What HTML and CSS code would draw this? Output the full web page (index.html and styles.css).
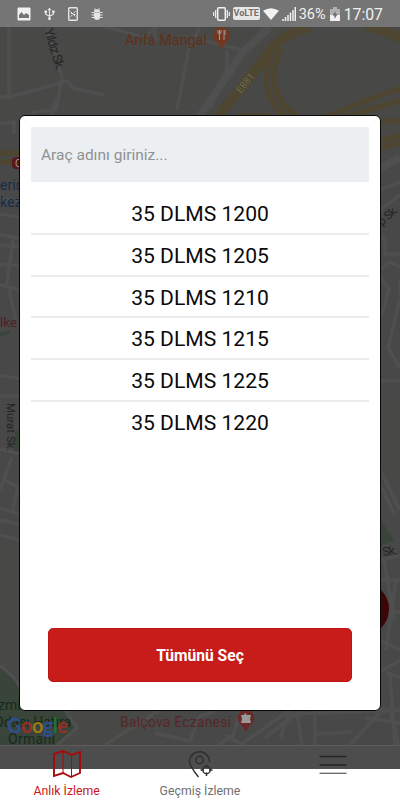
FILE: index.html
```html
<!DOCTYPE html>
<html lang="tr">
<head>
  <meta charset="UTF-8" />
  <meta name="viewport" content="width=device-width, initial-scale=1.0" />
  <title>Anlık İzleme</title>
  <link rel="stylesheet" href="styles.css">
</head>
<body>

  <header class="statusbar">
    <div class="status-left">
      <svg width="14" height="14" viewBox="0 0 14 14"><path fill="#f1f1f1" fill-rule="evenodd" d="M1.500 0.500h11a1 1 0 0 1 1 1v11a1 1 0 0 1-1 1h-11a1 1 0 0 1-1-1v-11a1 1 0 0 1 1-1zM2 11h10V8L9 6 7 8 4.500 5 2 8z"/></svg>
      <svg width="11" height="14" viewBox="0 0 12 14"><g fill="none" stroke="#e6e6e6" stroke-width="1.300"><path d="M6 2v10M1.800 4.500v2.700L6 9.500l4.200-2.300V4.500"/></g><path fill="#e6e6e6" d="M6 0l2 3H4zM.5 3.300h2.800V6H.5zM8.800 3.300h2.800V6H8.800z"/><circle cx="6" cy="12.200" r="1.600" fill="#e6e6e6"/></svg>
      <svg width="10" height="14" viewBox="0 0 10 14"><rect x=".7" y=".7" width="8.600" height="12.600" rx="1" fill="none" stroke="#e6e6e6" stroke-width="1.400"/><path d="M2.500 4.500l5 5M7.500 4.500L5.500 6M2.500 9.500L4.500 8M3 6.500h1M6 7.500h1.500" stroke="#e6e6e6"/></svg>
      <svg width="12" height="12" viewBox="0 0 12 12"><path fill="#e6e6e6" d="M3 4.500h6V9a3 3 0 0 1-6 0zM3 4a3 2.800 0 0 1 6 0z"/><path d="M3.500.5l1 1.500M8.500.5l-1 1.500M.5 4.500h2.500M9 4.500h2.500M.5 7h2.500M9 7h2.500M.5 9.500h2.500M9 9.500h2.500" stroke="#e6e6e6" stroke-width="1.100"/></svg>
    </div>
    <div class="status-right">
      <svg width="17" height="14" viewBox="0 0 17 14"><rect x="4.700" y=".8" width="7.600" height="12.400" rx="1" fill="none" stroke="#f1f1f1" stroke-width="1.500"/><path d="M2.700 3v8M14.300 3v8M.7 5v4M16.300 5v4" stroke="#f1f1f1" stroke-width="1.200"/></svg>
      <span class="volte">VoLTE</span>
      <svg width="16" height="12" viewBox="0 0 16 12"><path fill="#f1f1f1" d="M0 2.800Q8-2.500 16 2.800L8 12z"/></svg>
      <svg width="14" height="14" viewBox="0 0 14 14"><path d="M1 14v-2M3.500 14v-4M6 14V8M8.500 14V5.500M11 14V3M13.300 14V0" stroke="#f1f1f1" stroke-width="1.500"/></svg>
      <span class="battery-text">36%</span>
      <svg width="10" height="14" viewBox="0 0 10 14"><path fill="#b0b0b0" d="M3 0h4v2h3v6H0V2h3z"/><path fill="#f1f1f1" d="M0 8h10v6H0z"/><path fill="#666" d="M5.500 4L2.500 8.500h2V12l3-4.700h-2z"/></svg>
      <span class="clock">17:07</span>
    </div>
  </header>

  <main class="map">
    <svg class="map-canvas" viewBox="0 27 400 718" width="400" height="718">
      <rect y="27" width="400" height="718" fill="#484848"/>
      <path fill="#484846" d="M0 27h400v140L0 130zM0 530l20 10v140H0zM380 400h20v110l-20-40zM0 710h190l-70 35H0z"/>
      <!-- parks -->
      <path fill="#39443a" d="M0 667Q12 675 20 690L65 710 76 727 55 745H0zM15 432l5-3v24h-7zM380 519l14 21-14 6zM0 333l10-3v3l-10 4z"/>
      <!-- streets -->
      <g class="streets">
        <path d="M9 27v70H0M9 97l59-16 4 7 32 7M47 27l15 50-6 33-22 2-6 12M105 27l40 10 11-10M155 27v15M189 48l-12 62M189 48l11-21M200 40l43 10M227 50v18l-15 30v10M0 124l14-2v12M55 100l-4 20"/>
        <path d="M0 200h20M0 214l20 3M0 235l20 3M0 245l20 2M0 265h20M14 235l-8 53M0 285l20 5M9 290l8 35M0 375l20 4M0 396h20"/>
        <path d="M0 449l20 5M12 457L0 490M4 480l16 8M18 487l-6 25M0 508l20 6M0 520l20 4M0 535l20 5M0 666q15 10 20 21M65 710l12 18-20 17M105 745l55-35"/>
        <path d="M380 190l20-8M380 210l20-15M381 235l4 6v13l15 0M380 270l10-8 10 5M381 277l8 12-8 28M400 298l-12 50 12 20M380 381h20M400 280v15"/>
        <path d="M380 470l20 40M380 485l15 30M380 560l20-4M384 560l10 60M380 580h20M380 610l20 2M396 580l-10 70M380 640l20 10M380 672l20-12M390 675l5 70M386 672l14 6"/>
        <path d="M155 733l35 8 10-25 15-4M225 735l18 10M218 745l15-10 7-20M240 745l50-35M280 738l10-28M265 738l32-25 5 32M290 714l115-4M315 745v-35M317 734l35-2M350 745l35-38M365 718l35 5M390 710l10 40"/>
      </g>
      <g class="streets wide"><path d="M200 116L243 52 270 27M380 168l20-10"/></g>
      <!-- highways -->
      <g class="highway">
        <path d="M272 52Q262 80 271 98 276 108 286 118M281 48Q269 75 278 95 284 108 298 116M322 118L400 88M340 118l60-17M238 116h32M380 121h20M380 141l20-5M380 148l20-5M0 153h20M0 162h20"/>
        <path class="main-road" d="M217 118L275 45Q284 34 310 27M366 26q20 4 40 15"/>
      </g>
      <g class="labels">
        <text x="125" y="45" font-size="14.300" textLength="82" fill="#612f19">Arifa Mangal</text>
        <text transform="translate(44 30) rotate(73)" font-size="13" textLength="43" fill="#252525">Yıldız Sk.</text>
        <text transform="translate(241 94) rotate(-52)" font-size="10" fill="#6d684f">E881</text>
        <text transform="translate(7 403) rotate(90)" font-size="11.500" fill="#242424">Murat Sk.</text>
        <text transform="translate(382 226) rotate(-42)" font-size="11.500" textLength="23" fill="#242424">p Sk.</text>
        <text transform="translate(383 556) rotate(-8)" font-size="12" textLength="15" fill="#242424">Sk.</text>
        <text x="0" y="190" font-size="14" fill="#182c47">eris</text>
        <text x="0" y="207" font-size="14" fill="#182c47">kez</text>
        <text x="0" y="327" font-size="13.500" fill="#502020">lke</text>
        <text x="-2" y="710" font-size="14" fill="#142b18">zmir</text>
        <text x="-6" y="727" font-size="14" fill="#142b18" textLength="77">Odası Hatıra</text>
        <text x="8" y="744" font-size="14" fill="#142b18" textLength="47">Ormanı</text>
        <text x="120" y="727" font-size="14" fill="#572727" textLength="111">Balçova Eczanesi</text>
      </g>
      <rect x="12" y="157" width="14" height="12" rx="4" fill="#5c1919"/>
      <text x="15" y="167" font-size="10" fill="#999">O</text>
      <path fill="#713720" d="M221.500 49q-3-6-6-8a8.300 8.300 0 1 1 12 0q-3 2-6 8z"/>
      <path d="M218 30v3q1.500 2 3 0v-3M219.500 30v10M224 30v10M225 30v5" stroke="#999" fill="none"/>
      <path fill="#6a2929" d="M246 732q-3-6-6-8a8.300 8.300 0 1 1 12 0q-3 2-6 8z"/>
      <path fill="#999" d="M241 715h3l1-2 2 2h4l-1 4 1 4h-10l1-4z"/>
      <circle cx="362" cy="609" r="27" fill="#3d0505"/>
      <!-- map provider mark -->
      <text class="provider" x="7" y="733" textLength="61"><tspan fill="#2c4f92">G</tspan><tspan fill="#9a2e27">o</tspan><tspan fill="#9c7813">o</tspan><tspan fill="#2c4f92">g</tspan><tspan fill="#217039">l</tspan><tspan fill="#9a2e27">e</tspan></text>
    </svg>

    <section class="modal">
      <input class="search" type="text" placeholder="Araç adını giriniz..." />
      <ul class="vehicles">
        <li>35 DLMS 1200</li>
        <li>35 DLMS 1205</li>
        <li>35 DLMS 1210</li>
        <li>35 DLMS 1215</li>
        <li>35 DLMS 1225</li>
        <li>35 DLMS 1220</li>
      </ul>
      <button class="select-all">Tümünü Seç</button>
    </section>
  </main>

  <nav class="tabs">
    <a class="tab active">
      <svg width="30" height="30" viewBox="0 0 30 30"><path d="M2 5l9-3 9 4 8-3v21l-9 4-8-4-9 3z" fill="none" stroke="#a80b0b" stroke-width="1.900"/><path d="M11 2v22M19.500 6v22" stroke="#a80b0b"/></svg>
      <span>Anlık İzleme</span>
    </a>
    <a class="tab">
      <svg width="30" height="30" viewBox="0 0 30 30"><g fill="none" stroke="#2e2e2e" stroke-width="1.400"><path d="M13.500 28Q4.500 17 4.500 12a10 10 0 0 1 20 1.500"/><circle cx="14.500" cy="11" r="3.700"/><circle cx="21.500" cy="21" r="3.700"/><path d="M21.500 15.500v3M21.500 23.500v3.500M15.500 21h3.500M24 21h3.500"/></g></svg>
      <span>Geçmiş İzleme</span>
    </a>
    <a class="tab menu">
      <svg width="30" height="30" viewBox="0 0 30 30"><path d="M1.500 7.500h27M1.500 16h27" stroke="#242424" stroke-width="1.300"/><path d="M1.500 24.300h27" stroke="#666" stroke-width="1.300"/></svg>
    </a>
  </nav>

</body>
</html>
```
FILE: styles.css
```css
* {
  box-sizing: border-box;
}

body {
  margin: 0;
  width: 400px;
  height: 800px;
  display: flex;
  flex-direction: column;
  overflow: hidden;
  font-family: Roboto, "Noto Sans", sans-serif;
  background: #fff;
}

svg {
  display: block;
  flex-shrink: 0;
}

/* Status bar */
.statusbar {
  height: 27px;
  padding: 0 17px;
  display: flex;
  justify-content: space-between;
  background: #757575;
  color: #f1f1f1;
}

.status-left,
.status-right {
  display: flex;
  align-items: center;
}

.status-left {
  gap: 13px;
}

.status-right {
  gap: 3px;
  white-space: nowrap;
}

.volte {
  width: 27px;
  height: 13px;
  border-radius: 2px;
  background: #e6e6e6;
  color: #707070;
  font-size: 9px;
  font-weight: bold;
  line-height: 13px;
  text-align: center;
}

.battery-text {
  width: 28px;
  padding-top: 1px;
  font-size: 14.5px;
}

.clock {
  margin-left: 1px;
  padding-top: 1px;
  font-size: 15.8px;
}

/* Map */
.map {
  height: 718px;
  position: relative;
}

.streets {
  fill: none;
  stroke: #4f4f4f;
  stroke-width: 3.5;
}

.streets.wide {
  stroke-width: 8;
}

.highway {
  fill: none;
  stroke: #4e4631;
  stroke-width: 5.5;
}

.main-road {
  stroke-width: 10;
}

.provider {
  font-family: Lato, sans-serif;
  font-size: 20px;
  font-weight: bold;
}

/* Vehicle picker */
.modal {
  position: absolute;
  top: 88px;
  left: 19px;
  width: 362px;
  height: 596px;
  padding: 11px;
  display: flex;
  flex-direction: column;
  border: 1px solid #080808;
  border-radius: 6px;
  background: #fff;
}

.search {
  height: 55px;
  padding: 1px 10px 0;
  border: none;
  background: #ebeff2;
  color: #333;
  font-family: inherit;
  font-size: 15.5px;
  outline: none;
}

.search::placeholder {
  color: #8f9192;
}

.vehicles {
  flex: 1;
  margin: 11px 0 0;
  padding: 0;
  list-style: none;
}

.vehicles li {
  height: 41.8px;
  border-bottom: 2px solid #e9edf0;
  color: #0a0a0a;
  font-size: 21.1px;
  line-height: 41px;
  text-align: center;
}

.vehicles li:last-child {
  border-bottom: none;
}

.select-all {
  height: 54px;
  margin: 0 17px 17px;
  padding: 2px 0 0;
  border: 1px solid #bd1414;
  border-radius: 5px;
  background: #c71c1a;
  color: #fff;
  font-family: inherit;
  font-size: 15.6px;
  font-weight: bold;
}

/* Bottom tabs */
.tabs {
  height: 55px;
  display: flex;
  border-top: 1px solid #5c5c5c;
  background: linear-gradient(#4d4d4d 23px, #fff 23px);
}

.tab {
  flex: 1;
  padding-top: 3px;
  display: flex;
  flex-direction: column;
  align-items: center;
  gap: 5px;
  color: #707070;
  font-size: 12.3px;
  line-height: 15px;
}

.tab.active {
  color: #c8171d;
}
```
